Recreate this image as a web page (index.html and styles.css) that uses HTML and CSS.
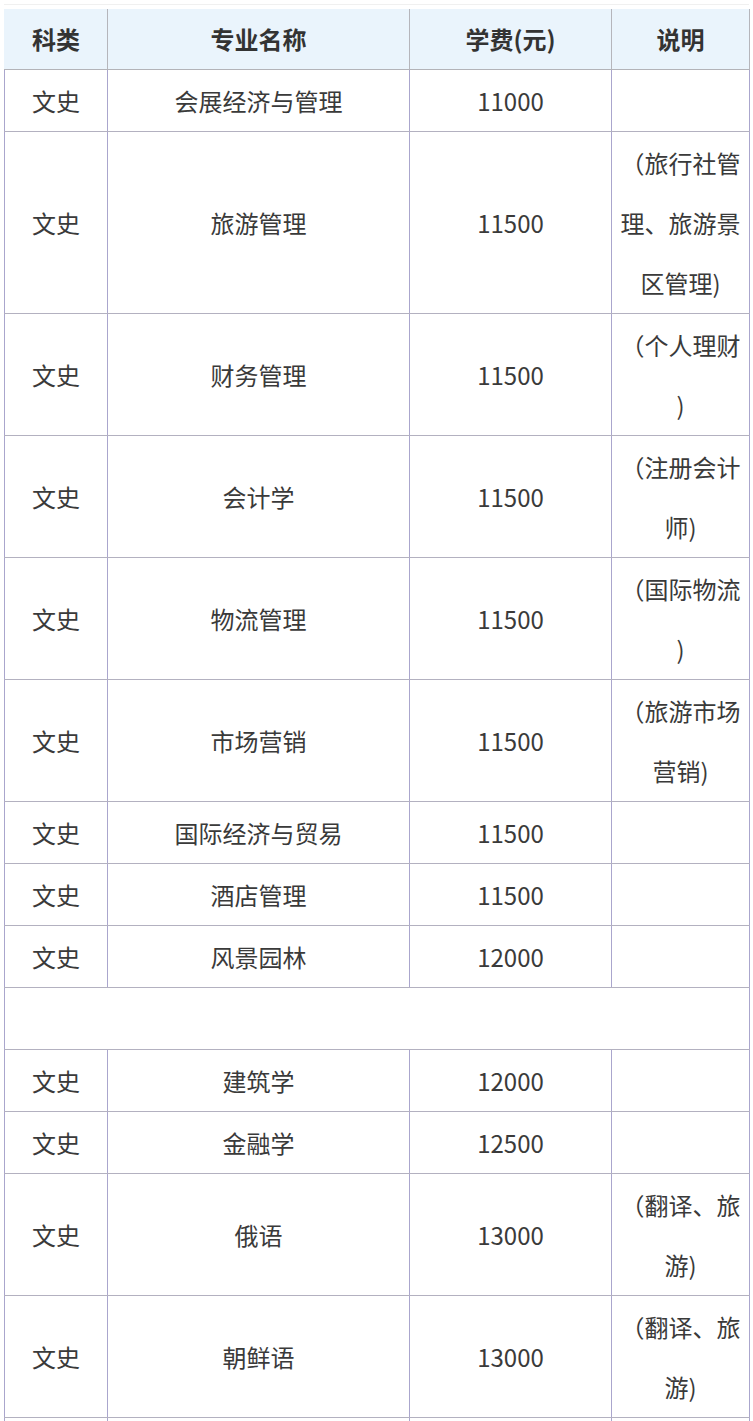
FILE: index.html
```html
<!DOCTYPE html>
<html lang="zh-CN">
<head>
<meta charset="utf-8">
<title>专业学费</title>
<link rel="stylesheet" href="styles.css">
</head>
<body>
<div class="page">
  <div class="rule"></div>
  <table class="fees">
    <colgroup>
      <col class="c1"><col class="c2"><col class="c3"><col class="c4">
    </colgroup>
    <thead>
      <tr><th>科类</th><th>专业名称</th><th>学费(元)</th><th>说明</th></tr>
    </thead>
    <tbody>
      <tr><td>文史</td><td>会展经济与管理</td><td>11000</td><td></td></tr>
      <tr><td>文史</td><td>旅游管理</td><td>11500</td><td class="note">（旅行社管<br>理、旅游景<br>区管理)</td></tr>
      <tr><td>文史</td><td>财务管理</td><td>11500</td><td class="note">（个人理财<br>)</td></tr>
      <tr><td>文史</td><td>会计学</td><td>11500</td><td class="note">（注册会计<br>师)</td></tr>
      <tr><td>文史</td><td>物流管理</td><td>11500</td><td class="note">（国际物流<br>)</td></tr>
      <tr><td>文史</td><td>市场营销</td><td>11500</td><td class="note">（旅游市场<br>营销)</td></tr>
      <tr><td>文史</td><td>国际经济与贸易</td><td>11500</td><td></td></tr>
      <tr><td>文史</td><td>酒店管理</td><td>11500</td><td></td></tr>
      <tr><td>文史</td><td>风景园林</td><td>12000</td><td></td></tr>
      <tr class="blank"><td colspan="4">&nbsp;</td></tr>
      <tr><td>文史</td><td>建筑学</td><td>12000</td><td></td></tr>
      <tr><td>文史</td><td>金融学</td><td>12500</td><td></td></tr>
      <tr><td>文史</td><td>俄语</td><td>13000</td><td class="note">（翻译、旅<br>游)</td></tr>
      <tr><td>文史</td><td>朝鲜语</td><td>13000</td><td class="note">（翻译、旅<br>游)</td></tr>
      <tr class="blank"><td></td><td></td><td></td><td></td></tr>
    </tbody>
  </table>
</div>
</body>
</html>
```

FILE: styles.css
```css
html, body {
  margin: 0;
  padding: 0;
  background: #ffffff;
}
body {
  font-family: "Noto Sans CJK SC", "Noto Sans", sans-serif;
  color: #3a3a3a;
  overflow: hidden;
}
.page {
  padding: 4px 4px 0 4px;
}
.rule {
  height: 1px;
  background: #f0f0f0;
  margin-bottom: 4px;
}
.fees {
  border-collapse: collapse;
  table-layout: fixed;
  width: 745px;
  font-size: 24px;
}
.c1 { width: 103px; }
.c2 { width: 302px; }
.c3 { width: 202px; }
.c4 { width: 138px; }
.fees th {
  background: #eaf4fc;
  font-weight: 700;
  color: #333333;
  line-height: 60px;
  padding: 0;
  text-align: center;
  border-left: 1px solid #bdbdc4;
  border-right: 1px solid #b5b5bb;
  border-bottom: 1px solid #b3b3b8;
  border-top: none;
}
.fees th:first-child {
  border-left: 1px solid #eaf4fc;
}
.fees td {
  line-height: 60px;
  padding: 1px 0 0 0;
  text-align: center;
  vertical-align: middle;
  border-left: 1px solid #aaa6cd;
  border-right: 1px solid #aaa6cd;
  border-top: 1px solid #b3b1c0;
  border-bottom: 1px solid #b3b1c0;
}
.fees td.note {
  white-space: nowrap;
}
.fees tr.blank td {
  height: 60px;
}
```
